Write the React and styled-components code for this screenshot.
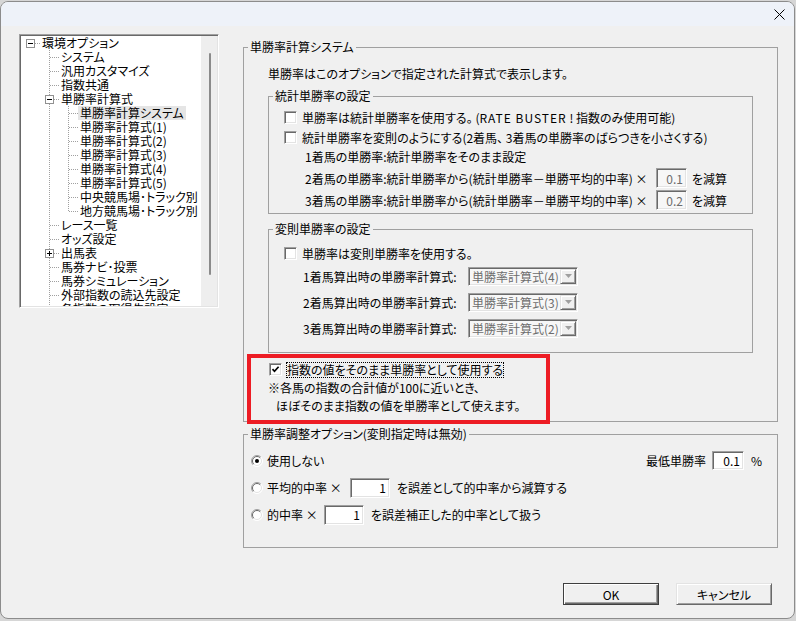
import React from 'react';
import styled, { createGlobalStyle } from 'styled-components';

const FONT = `"Noto Sans CJK JP", "Noto Sans", sans-serif`;

const Global = createGlobalStyle`
  html, body { margin: 0; padding: 0; }
  body {
    background: #d6d6d6;
    font-family: ${FONT};
    font-size: 12px;
    color: #000;
    font-feature-settings: "palt";
  }
  #root { width: 796px; height: 621px; overflow: hidden; }
`;

const Window = styled.div`
  width: 795px;
  height: 618px;
  margin-top: 1px;
  box-sizing: border-box;
  border: 1px solid #8c8c8c;
  border-radius: 8px;
  background: #f0f0f0;
  overflow: hidden;
  display: flex;
  flex-direction: column;
`;

const TitleBar = styled.div`
  height: 24px;
  flex: none;
  background: #eef2f9;
  display: flex;
  justify-content: flex-end;
  align-items: center;
`;

const CloseBtn = styled.div`
  width: 30px;
  height: 24px;
  display: flex;
  align-items: center;
  justify-content: center;
`;

const Body = styled.div`
  flex: 1;
  display: flex;
  flex-direction: column;
  padding: 8px 16px 0 18px;
`;

const MainRow = styled.div`
  display: flex;
  align-items: flex-start;
`;

/* ---------- tree ---------- */
const TreePanel = styled.div`
  flex: none;
  width: 200px;
  height: 274px;
  box-sizing: border-box;
  padding: 1px;
  border: 1px solid;
  border-color: #a0a0a0 #fff #fff #a0a0a0;
  box-shadow: inset 1px 1px #696969, inset -1px -1px #e3e3e3;
  display: flex;
  overflow: hidden;
`;

const TreeList = styled.div`
  flex: 1;
  background: #fff;
  overflow: hidden;
  white-space: nowrap;
`;

const ScrollTrack = styled.div`
  flex: none;
  width: 16px;
  background: #eeeeee;
  padding-top: 17px;
  box-sizing: border-box;
`;

const ScrollThumb = styled.div`
  width: 2px;
  height: 222px;
  margin-left: 8px;
  border-radius: 1px;
  background: #8b8b8b;
`;

const TreeRow = styled.div`
  display: flex;
  height: 14px;
  align-items: stretch;
`;

const dotsV = `repeating-linear-gradient(to bottom, #a0a0a0 0 1px, transparent 1px 2px)`;
const dotsH = `repeating-linear-gradient(to right, #a0a0a0 0 1px, transparent 1px 2px)`;

const Guide = styled.span`
  position: relative;
  flex: none;
  width: 19px;
  &::before {
    content: '';
    position: absolute;
    left: 9px;
    width: 1px;
    top: 0;
    bottom: ${(p) => (p.$v === 'top' ? '7px' : '0')};
    display: ${(p) => (p.$v ? 'block' : 'none')};
    background: ${dotsV};
  }
  &::after {
    content: '';
    position: absolute;
    top: 7px;
    left: 10px;
    right: 0;
    height: 1px;
    display: ${(p) => (p.$h ? 'block' : 'none')};
    background: ${dotsH};
  }
`;

const ExpandBox = styled.span`
  position: absolute;
  left: 5px;
  top: 3px;
  width: 9px;
  height: 9px;
  box-sizing: border-box;
  border: 1px solid #919191;
  background: #fff;
  z-index: 1;
  &::before {
    content: '';
    position: absolute;
    left: 1px;
    top: 3px;
    width: 5px;
    height: 1px;
    background: #000;
  }
  &::after {
    content: '';
    position: absolute;
    left: 3px;
    top: 1px;
    width: 1px;
    height: 5px;
    background: #000;
    display: ${(p) => (p.$plus ? 'block' : 'none')};
  }
`;

const TreeLabel = styled.span`
  display: inline-block;
  padding: 0 2px;
  line-height: 14px;
  height: 14px;
  background: ${(p) => (p.$sel ? '#e5e5e5' : 'transparent')};
`;

const treeItems = [
  { t: '環境オプション', d: 0, box: 'minus' },
  { t: 'システム', d: 1 },
  { t: '汎用カスタマイズ', d: 1 },
  { t: '指数共通', d: 1 },
  { t: '単勝率計算式', d: 1, box: 'minus' },
  { t: '単勝率計算システム', d: 2, sel: true },
  { t: '単勝率計算式(1)', d: 2 },
  { t: '単勝率計算式(2)', d: 2 },
  { t: '単勝率計算式(3)', d: 2 },
  { t: '単勝率計算式(4)', d: 2 },
  { t: '単勝率計算式(5)', d: 2 },
  { t: '中央競馬場･トラック別', d: 2 },
  { t: '地方競馬場･トラック別', d: 2, last: true },
  { t: 'レース一覧', d: 1 },
  { t: 'オッズ設定', d: 1 },
  { t: '出馬表', d: 1, box: 'plus' },
  { t: '馬券ナビ･投票', d: 1 },
  { t: '馬券シミュレーション', d: 1 },
  { t: '外部指数の読込先設定', d: 1 },
  { t: '各指数の取得先設定', d: 1 },
];

function TreeItem({ item }) {
  const cells = [];
  if (item.d === 0) {
    cells.push(
      <Guide key="c0" $h>
        <ExpandBox />
      </Guide>
    );
  } else {
    cells.push(<Guide key="c0" />);
    if (item.d === 2) cells.push(<Guide key="c1" $v="full" />);
    cells.push(
      <Guide key="cx" $v={item.last ? 'top' : 'full'} $h>
        {item.box && <ExpandBox $plus={item.box === 'plus'} />}
      </Guide>
    );
  }
  return (
    <TreeRow>
      {cells}
      <TreeLabel $sel={item.sel}>{item.t}</TreeLabel>
    </TreeRow>
  );
}

/* ---------- right side ---------- */
const RightCol = styled.div`
  flex: none;
  width: 535px;
  margin-left: 24px;
  display: flex;
  flex-direction: column;
`;

const Group = styled.fieldset`
  margin: ${(p) => p.$mt || 0}px 0 0 0;
  padding: 0;
  min-width: 0;
  box-sizing: border-box;
  border: 1px solid #a0a0a0;
`;

const Legend = styled.legend`
  margin-left: 4px;
  padding: 0 2px;
  height: 14px;
  line-height: 14px;
  font-size: 12px;
`;

const GroupBody = styled.div`
  padding: ${(p) => p.$pad};
  display: flex;
  flex-direction: column;
`;

const Desc = styled.div`
  line-height: 14px;
  height: 14px;
  white-space: nowrap;
`;

const CheckRow = styled.label`
  display: flex;
  align-items: center;
  height: ${(p) => p.$h || 20}px;
  gap: 5px;
  margin-left: ${(p) => p.$ml || 0}px;
  white-space: nowrap;
`;

const Wide = styled.span`
  letter-spacing: 1px;
`;

const CheckBoxBox = styled.span`
  position: relative;
  flex: none;
  width: 13px;
  height: 13px;
  box-sizing: border-box;
  background: #fff;
  border: 1px solid;
  border-color: #a0a0a0 #fff #fff #a0a0a0;
  box-shadow: inset 1px 1px #696969, inset -1px -1px #e3e3e3;
  svg { position: absolute; left: 1px; top: 1px; }
`;

function CheckBox({ checked }) {
  return (
    <CheckBoxBox>
      {checked && (
        <svg width="9" height="9" viewBox="0 0 9 9">
          <path d="M1.5 4.2 L3.5 6.3 L7.6 1.8" fill="none" stroke="#000" strokeWidth="1.7" />
        </svg>
      )}
    </CheckBoxBox>
  );
}

const PlainRow = styled.div`
  height: ${(p) => p.$h || 20}px;
  line-height: ${(p) => p.$h || 20}px;
  margin-left: ${(p) => p.$ml || 0}px;
  white-space: nowrap;
`;

const FormulaRow = styled.div`
  display: grid;
  grid-template-columns: 351px 31px auto;
  align-items: center;
  height: 22px;
  margin-left: 21px;
  white-space: nowrap;
`;

const Suffix = styled.span`
  margin-left: ${(p) => p.$ml || 5}px;
  white-space: nowrap;
`;

const Edit = styled.input`
  box-sizing: border-box;
  width: ${(p) => p.$w}px;
  height: ${(p) => p.$h || 20}px;
  margin: 0 0 0 ${(p) => p.$ml || 0}px;
  padding: 0 3px 0 0;
  font: 12px ${FONT};
  text-align: right;
  outline: none;
  background: ${(p) => (p.disabled ? '#f7f7f7' : '#fff')};
  color: ${(p) => (p.disabled ? '#6d6d6d' : '#000')};
  -webkit-text-fill-color: ${(p) => (p.disabled ? '#6d6d6d' : '#000')};
  opacity: 1;
  border: 1px solid;
  border-color: #a0a0a0 #fff #fff #a0a0a0;
  box-shadow: inset 1px 1px #696969, inset -1px -1px #e3e3e3;
`;

const ComboRow = styled.div`
  display: grid;
  grid-template-columns: 165px 110px;
  align-items: center;
  height: 26px;
  margin-left: 19px;
  white-space: nowrap;
`;

const Combo = styled.div`
  display: flex;
  width: 110px;
  height: 19px;
  box-sizing: border-box;
  background: #f7f7f7;
  color: #6d6d6d;
  border: 1px solid;
  border-color: #a0a0a0 #fff #fff #a0a0a0;
  box-shadow: inset 1px 1px #696969, inset -1px -1px #e3e3e3;
  padding: 1px;
`;

const ComboText = styled.span`
  flex: 1;
  padding-left: 2px;
  line-height: 15px;
  white-space: nowrap;
  overflow: hidden;
`;

const ComboBtn = styled.span`
  flex: none;
  width: 16px;
  box-sizing: border-box;
  background: #f0f0f0;
  border: 1px solid;
  border-color: #e3e3e3 #696969 #696969 #e3e3e3;
  box-shadow: inset 1px 1px #fff, inset -1px -1px #a0a0a0;
  display: flex;
  align-items: center;
  justify-content: center;
`;

function ComboBox({ value }) {
  return (
    <Combo>
      <ComboText>{value}</ComboText>
      <ComboBtn>
        <svg width="7" height="4" viewBox="0 0 7 4">
          <path d="M0 0 H7 L3.5 4 Z" fill="#a0a0a0" />
        </svg>
      </ComboBtn>
    </Combo>
  );
}

const Annotated = styled.div`
  position: relative;
  margin-top: 7px;
  display: flex;
  flex-direction: column;
`;

const FocusText = styled.span`
  display: inline-block;
  outline: 1px dotted #000;
  outline-offset: 0;
  line-height: 14px;
  height: 14px;
`;

const Note = styled.div`
  line-height: 18px;
  height: 18px;
  padding-left: ${(p) => p.$pl || 0}px;
  white-space: nowrap;
`;

const RedFrame = styled.div`
  position: absolute;
  left: -21px;
  top: -6px;
  width: 303px;
  height: 70px;
  box-sizing: border-box;
  border: 4px solid #ed1c24;
  pointer-events: none;
`;

const RadioRow = styled.div`
  display: flex;
  align-items: center;
  height: 27px;
  white-space: nowrap;
`;

const RadioLabel = styled.span`
  margin-left: 4px;
  width: ${(p) => (p.$w ? `${p.$w}px` : 'auto')};
  flex: none;
`;

const RightGroup = styled.div`
  margin-left: auto;
  display: flex;
  align-items: center;
`;

function Radio({ checked }) {
  return (
    <svg width="12" height="12" viewBox="0 0 12 12" style={{ flex: 'none' }}>
      <circle cx="6" cy="6" r="5.5" fill="#fff" />
      <path d="M2.1 9.9 A5.5 5.5 0 0 1 9.9 2.1" fill="none" stroke="#a0a0a0" />
      <path d="M9.9 2.1 A5.5 5.5 0 0 1 2.1 9.9" fill="none" stroke="#ffffff" />
      <path d="M2.8 9.2 A4.5 4.5 0 0 1 9.2 2.8" fill="none" stroke="#696969" />
      <path d="M9.2 2.8 A4.5 4.5 0 0 1 2.8 9.2" fill="none" stroke="#e3e3e3" />
      {checked && <circle cx="6" cy="6" r="2" fill="#000" />}
    </svg>
  );
}

/* ---------- footer ---------- */
const Footer = styled.div`
  margin-top: auto;
  display: flex;
  justify-content: flex-end;
  gap: 17px;
  padding: 0 6px 13px 0;
`;

const Button = styled.button`
  width: 96px;
  height: 22px;
  padding: 0;
  font: 12px ${FONT};
  font-feature-settings: "palt";
  color: #000;
  background: #f0f0f0;
  border: 1px solid;
  border-color: ${(p) => (p.$default ? '#3f3f3f' : '#e3e3e3 #696969 #696969 #e3e3e3')};
  box-shadow: ${(p) =>
    p.$default
      ? 'inset 1px 1px #fff, inset -1px -1px #696969, inset -2px -2px #a0a0a0'
      : 'inset 1px 1px #fff, inset -1px -1px #a0a0a0'};
`;

export default function App() {
  return (
    <>
      <Global />
      <Window>
        <TitleBar>
          <CloseBtn>
            <svg width="11" height="11" viewBox="0 0 11 11">
              <path d="M0.5 0.5 L10.5 10.5 M10.5 0.5 L0.5 10.5" stroke="#000" strokeWidth="1" />
            </svg>
          </CloseBtn>
        </TitleBar>
        <Body>
          <MainRow>
            <TreePanel>
              <TreeList>
                {treeItems.map((it, i) => (
                  <TreeItem key={i} item={it} />
                ))}
              </TreeList>
              <ScrollTrack>
                <ScrollThumb />
              </ScrollTrack>
            </TreePanel>

            <RightCol>
              <Group $mt={6}>
                <Legend>単勝率計算システム</Legend>
                <GroupBody $pad="13px 24px 6px 24px">
                  <Desc>単勝率はこのオプションで指定された計算式で表示します。</Desc>

                  <Group $mt={8}>
                    <Legend>統計単勝率の設定</Legend>
                    <GroupBody $pad="4px 0 2px 15px">
                      <CheckRow>
                        <CheckBox />
                        <span>
                          単勝率は統計単勝率を使用する。 (<Wide>RATE BUSTER</Wide> ! 指数のみ使用可能)
                        </span>
                      </CheckRow>
                      <CheckRow>
                        <CheckBox />
                        <span>統計単勝率を変則のようにする(2着馬、 3着馬の単勝率のばらつきを小さくする)</span>
                      </CheckRow>
                      <PlainRow $ml={21}>1着馬の単勝率:統計単勝率をそのまま設定</PlainRow>
                      <FormulaRow>
                        <span>2着馬の単勝率:統計単勝率から(統計単勝率－単勝平均的中率) ×</span>
                        <Edit $w={31} disabled defaultValue="0.1" />
                        <Suffix>を減算</Suffix>
                      </FormulaRow>
                      <FormulaRow>
                        <span>3着馬の単勝率:統計単勝率から(統計単勝率－単勝平均的中率) ×</span>
                        <Edit $w={31} disabled defaultValue="0.2" />
                        <Suffix>を減算</Suffix>
                      </FormulaRow>
                    </GroupBody>
                  </Group>

                  <Group $mt={8}>
                    <Legend>変則単勝率の設定</Legend>
                    <GroupBody $pad="7px 0 11px 15px">
                      <CheckRow>
                        <CheckBox />
                        <span>単勝率は変則単勝率を使用する。</span>
                      </CheckRow>
                      <ComboRow>
                        <span>1着馬算出時の単勝率計算式:</span>
                        <ComboBox value="単勝率計算式(4)" />
                      </ComboRow>
                      <ComboRow>
                        <span>2着馬算出時の単勝率計算式:</span>
                        <ComboBox value="単勝率計算式(3)" />
                      </ComboRow>
                      <ComboRow>
                        <span>3着馬算出時の単勝率計算式:</span>
                        <ComboBox value="単勝率計算式(2)" />
                      </ComboRow>
                    </GroupBody>
                  </Group>

                  <Annotated>
                    <CheckRow $h={19} $ml={1}>
                      <CheckBox checked />
                      <FocusText>指数の値をそのまま単勝率として使用する</FocusText>
                    </CheckRow>
                    <Note>※各馬の指数の合計値が100に近いとき、</Note>
                    <Note $pl={8}>ほぼそのまま指数の値を単勝率として使えます。</Note>
                    <RedFrame />
                  </Annotated>
                </GroupBody>
              </Group>

              <Group $mt={5}>
                <Legend>単勝率調整オプション(変則指定時は無効)</Legend>
                <GroupBody $pad="6px 15px 19px 7px">
                  <RadioRow>
                    <Radio checked />
                    <RadioLabel>使用しない</RadioLabel>
                    <RightGroup>
                      <span>最低単勝率</span>
                      <Edit $w={32} $h={19} $ml={6} defaultValue="0.1" />
                      <Suffix $ml={7}>%</Suffix>
                    </RightGroup>
                  </RadioRow>
                  <RadioRow>
                    <Radio />
                    <RadioLabel $w={83}>平均的中率 ×</RadioLabel>
                    <Edit $w={40} defaultValue="1" />
                    <Suffix $ml={7}>を誤差として的中率から減算する</Suffix>
                  </RadioRow>
                  <RadioRow>
                    <Radio />
                    <RadioLabel $w={57}>的中率 ×</RadioLabel>
                    <Edit $w={40} defaultValue="1" />
                    <Suffix $ml={7}>を誤差補正した的中率として扱う</Suffix>
                  </RadioRow>
                </GroupBody>
              </Group>
            </RightCol>
          </MainRow>

          <Footer>
            <Button $default>OK</Button>
            <Button>キャンセル</Button>
          </Footer>
        </Body>
      </Window>
    </>
  );
}
